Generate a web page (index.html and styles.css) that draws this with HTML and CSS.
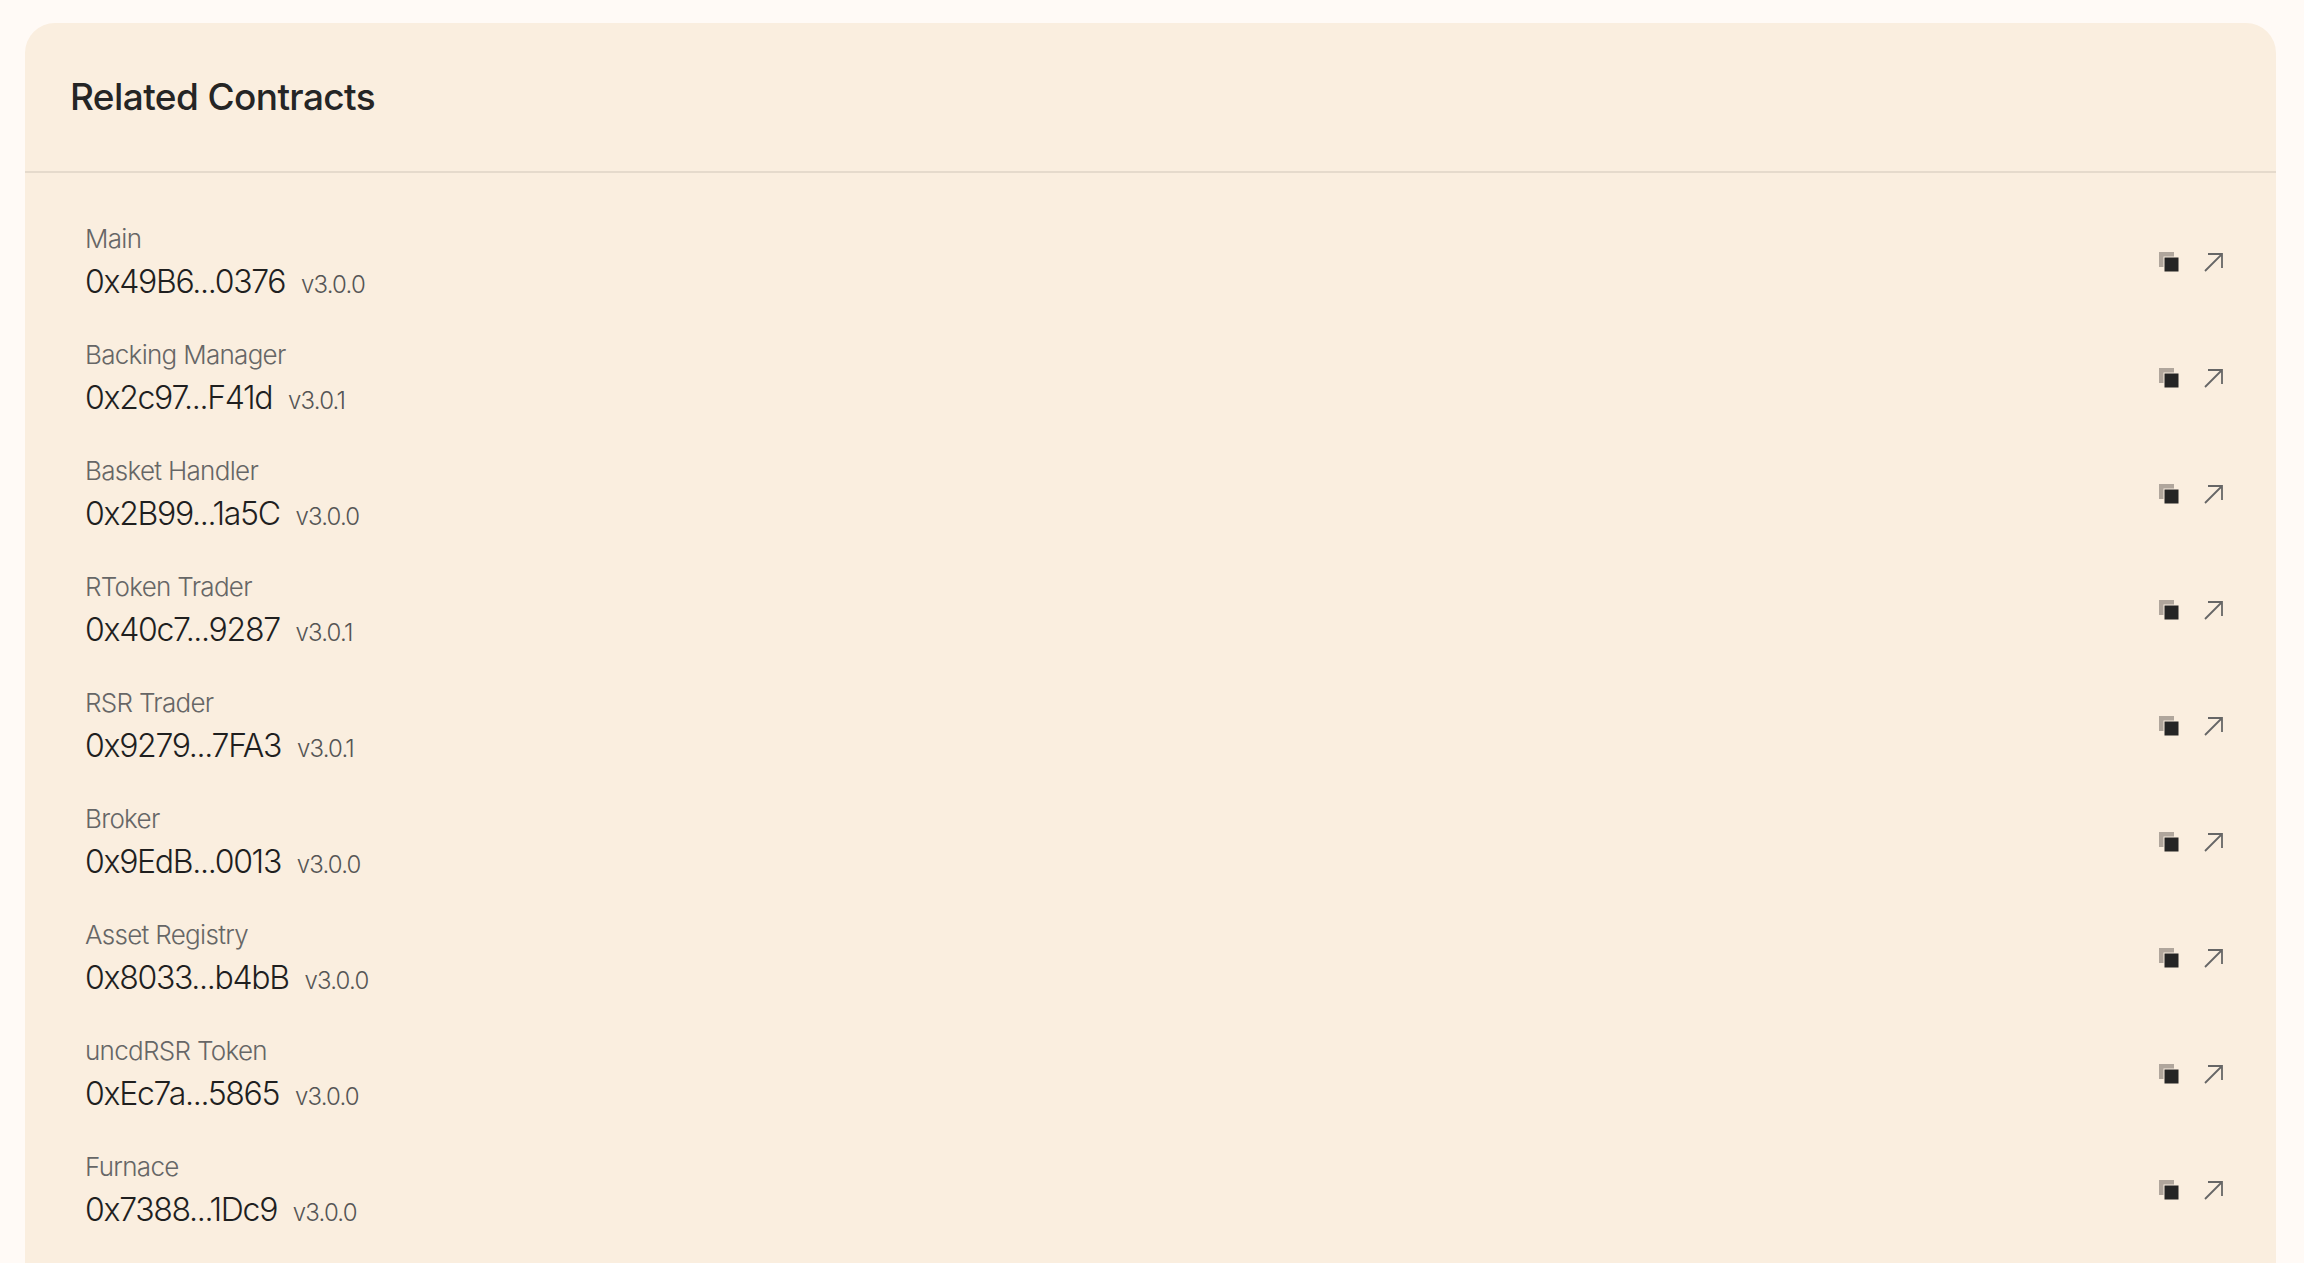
FILE: index.html
```html
<!DOCTYPE html>
<html lang="en">
<head>
    <meta charset="UTF-8">
    <title>Related Contracts</title>
    <link rel="stylesheet" href="styles.css">
</head>
<body>
    <svg class="sprite" width="0" height="0">
        <symbol id="copy" viewBox="0 0 20 20">
            <rect x="0" y="0" width="15" height="15" fill="#b0a69c"/>
            <rect x="5" y="5" width="15" height="15" fill="#252525" stroke="#faeedf" stroke-width="1"/>
        </symbol>
        <symbol id="external" viewBox="0 0 20 20">
            <path d="M1 19L18 2M4 2H18V16" fill="none" stroke="#666" stroke-width="1.8"/>
        </symbol>
    </svg>
    <div class="card">
        <h1 class="card-title">Related Contracts</h1>
        <div class="list">
            <div class="row">
                <div class="info">
                    <div class="name">Main</div>
                    <div class="addr">0x49B6...0376 <span class="ver">v3.0.0</span></div>
                </div>
                <div class="actions"><svg class="ico-copy"><use href="#copy"/></svg><svg class="ico-ext"><use href="#external"/></svg></div>
            </div>
            <div class="row">
                <div class="info">
                    <div class="name">Backing Manager</div>
                    <div class="addr">0x2c97...F41d <span class="ver">v3.0.1</span></div>
                </div>
                <div class="actions"><svg class="ico-copy"><use href="#copy"/></svg><svg class="ico-ext"><use href="#external"/></svg></div>
            </div>
            <div class="row">
                <div class="info">
                    <div class="name">Basket Handler</div>
                    <div class="addr">0x2B99...1a5C <span class="ver">v3.0.0</span></div>
                </div>
                <div class="actions"><svg class="ico-copy"><use href="#copy"/></svg><svg class="ico-ext"><use href="#external"/></svg></div>
            </div>
            <div class="row">
                <div class="info">
                    <div class="name">RToken Trader</div>
                    <div class="addr">0x40c7...9287 <span class="ver">v3.0.1</span></div>
                </div>
                <div class="actions"><svg class="ico-copy"><use href="#copy"/></svg><svg class="ico-ext"><use href="#external"/></svg></div>
            </div>
            <div class="row">
                <div class="info">
                    <div class="name">RSR Trader</div>
                    <div class="addr">0x9279...7FA3 <span class="ver">v3.0.1</span></div>
                </div>
                <div class="actions"><svg class="ico-copy"><use href="#copy"/></svg><svg class="ico-ext"><use href="#external"/></svg></div>
            </div>
            <div class="row">
                <div class="info">
                    <div class="name">Broker</div>
                    <div class="addr">0x9EdB...0013 <span class="ver">v3.0.0</span></div>
                </div>
                <div class="actions"><svg class="ico-copy"><use href="#copy"/></svg><svg class="ico-ext"><use href="#external"/></svg></div>
            </div>
            <div class="row">
                <div class="info">
                    <div class="name">Asset Registry</div>
                    <div class="addr">0x8033...b4bB <span class="ver">v3.0.0</span></div>
                </div>
                <div class="actions"><svg class="ico-copy"><use href="#copy"/></svg><svg class="ico-ext"><use href="#external"/></svg></div>
            </div>
            <div class="row">
                <div class="info">
                    <div class="name">uncdRSR Token</div>
                    <div class="addr">0xEc7a...5865 <span class="ver">v3.0.0</span></div>
                </div>
                <div class="actions"><svg class="ico-copy"><use href="#copy"/></svg><svg class="ico-ext"><use href="#external"/></svg></div>
            </div>
            <div class="row">
                <div class="info">
                    <div class="name">Furnace</div>
                    <div class="addr">0x7388...1Dc9 <span class="ver">v3.0.0</span></div>
                </div>
                <div class="actions"><svg class="ico-copy"><use href="#copy"/></svg><svg class="ico-ext"><use href="#external"/></svg></div>
            </div>
        </div>
    </div>
</body>
</html>
```

FILE: styles.css
```css
html, body {
    height: 100%;
    overflow: hidden;
}

body {
    box-sizing: border-box;
    margin: 0;
    padding: 23px 28px 0 25px;
    background-color: #fffaf6;
    font-family: Inter, sans-serif;
    color: #252525;
}

.sprite {
    position: absolute;
}

.card {
    height: 100%;
    background-color: #faeedf;
    border-radius: 30px 30px 0 0;
}

.card-title {
    margin: 0;
    padding: 50px 45px 50px;
    height: 48px;
    line-height: 48px;
    font-size: 37px;
    font-weight: 500;
    letter-spacing: -0.6px;
    border-bottom: 2px solid #e5dacc;
}

.list {
    padding: 33px 52px 0 60px;
}

.row {
    display: flex;
    align-items: center;
    justify-content: space-between;
    height: 116px;
}

.name {
    font-size: 26px;
    line-height: 36px;
    font-weight: 300;
    letter-spacing: -0.7px;
    color: #666;
}

.addr {
    margin-top: 3px;
    font-size: 32px;
    line-height: 44px;
    font-weight: 300;
    letter-spacing: -1.3px;
    color: #1f1f1f;
}

.ver {
    margin-left: 8px;
    font-size: 24px;
    font-weight: 300;
    letter-spacing: -0.8px;
    color: #555;
}

.actions {
    display: flex;
    align-items: center;
    gap: 25px;
    margin-bottom: 5px;
}

.ico-copy {
    width: 20px;
    height: 20px;
}

.ico-ext {
    width: 20px;
    height: 20px;
}
```
